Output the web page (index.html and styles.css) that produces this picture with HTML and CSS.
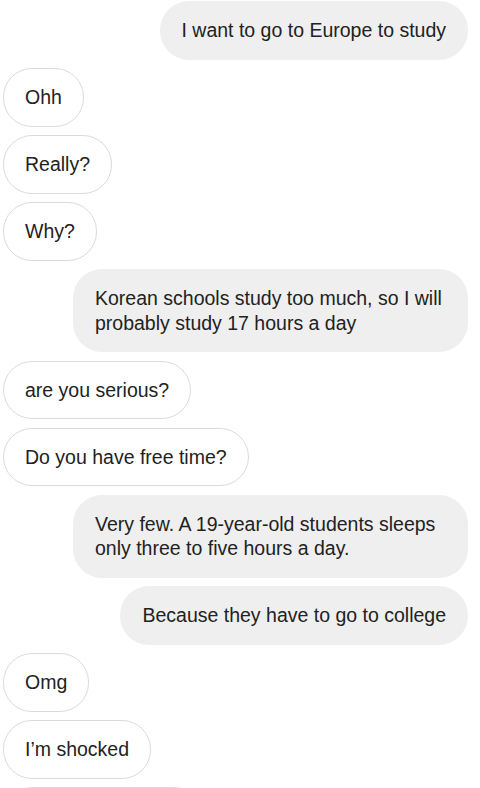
FILE: index.html
```html
<!DOCTYPE html>
<html lang="en">
<head>
  <meta charset="UTF-8" />
  <title>Chat</title>
  <link rel="stylesheet" href="styles.css">
</head>
<body>
  <div class="chat">
    <div class="msg sent">I want to go to Europe to study</div>
    <div class="msg received">Ohh</div>
    <div class="msg received">Really?</div>
    <div class="msg received">Why?</div>
    <div class="msg sent">Korean schools study too much, so I will probably study 17 hours a day</div>
    <div class="msg received">are you serious?</div>
    <div class="msg received">Do you have free time?</div>
    <div class="msg sent">Very few. A 19-year-old students sleeps only three to five hours a day.</div>
    <div class="msg sent">Because they have to go to college</div>
    <div class="msg received">Omg</div>
    <div class="msg received">I’m shocked</div>
    <div class="msg received next"></div>
  </div>
</body>
</html>
```

FILE: styles.css
```css
html, body {
  overflow: hidden;
}
body {
  margin: 0;
  background: #fff;
  font-family: "Liberation Sans", Arial, sans-serif;
  color: #222;
}
.chat {
  display: flex;
  flex-direction: column;
  gap: 8.5px;
  padding: 1px 12px 0 3px;
}
.msg {
  max-width: 395px;
  box-sizing: border-box;
  padding: 16px 21px;
  font-size: 19.5px;
  line-height: 24.5px;
  border: 1px solid transparent;
  border-radius: 29px;
}
.sent {
  align-self: flex-end;
  background: #efefef;
}
.received {
  align-self: flex-start;
  border-color: #dbdbdb;
}
/* next bubble, only its top edge shows */
.next {
  width: 200px;
  height: 58px;
}
```
